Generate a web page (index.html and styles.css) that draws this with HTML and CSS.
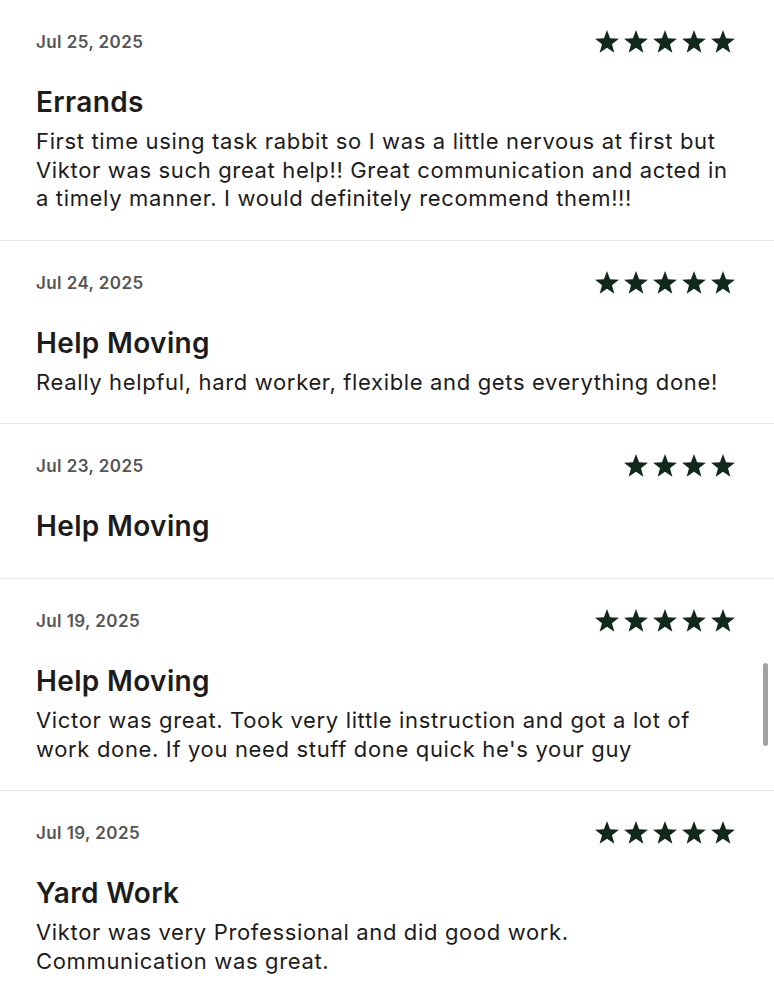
FILE: index.html
```html
<!DOCTYPE html>
<html>
<head>
<meta charset="utf-8">
<link rel="stylesheet" href="styles.css">
</head>
<body>
<svg width="0" height="0" class="defs">
  <defs>
    <symbol id="star" viewBox="0 0 24 24">
      <polygon points="12,1 14.85,8.6 23,8.9 16.6,14 18.8,22 12,17.4 5.2,22 7.4,14 1,8.9 9.15,8.6"/>
    </symbol>
  </defs>
</svg>
<main class="reviews">
  <section class="review">
    <div class="head">
      <span class="date">Jul 25, 2025</span>
      <span class="stars"><svg><use href="#star"/></svg><svg><use href="#star"/></svg><svg><use href="#star"/></svg><svg><use href="#star"/></svg><svg><use href="#star"/></svg></span>
    </div>
    <h2 class="title">Errands</h2>
    <p class="body">First time using task rabbit so I was a little nervous at first but Viktor was such great help!! Great communication and acted in a timely manner. I would definitely recommend them!!!</p>
  </section>
  <section class="review">
    <div class="head">
      <span class="date">Jul 24, 2025</span>
      <span class="stars"><svg><use href="#star"/></svg><svg><use href="#star"/></svg><svg><use href="#star"/></svg><svg><use href="#star"/></svg><svg><use href="#star"/></svg></span>
    </div>
    <h2 class="title">Help Moving</h2>
    <p class="body">Really helpful, hard worker, flexible and gets everything done!</p>
  </section>
  <section class="review">
    <div class="head">
      <span class="date">Jul 23, 2025</span>
      <span class="stars"><svg><use href="#star"/></svg><svg><use href="#star"/></svg><svg><use href="#star"/></svg><svg><use href="#star"/></svg></span>
    </div>
    <h2 class="title">Help Moving</h2>
    <p class="body"></p>
  </section>
  <section class="review">
    <div class="head">
      <span class="date">Jul 19, 2025</span>
      <span class="stars"><svg><use href="#star"/></svg><svg><use href="#star"/></svg><svg><use href="#star"/></svg><svg><use href="#star"/></svg><svg><use href="#star"/></svg></span>
    </div>
    <h2 class="title">Help Moving</h2>
    <p class="body">Victor was great. Took very little instruction and got a lot of work done. If you need stuff done quick he's your guy</p>
  </section>
  <section class="review">
    <div class="head">
      <span class="date">Jul 19, 2025</span>
      <span class="stars"><svg><use href="#star"/></svg><svg><use href="#star"/></svg><svg><use href="#star"/></svg><svg><use href="#star"/></svg><svg><use href="#star"/></svg></span>
    </div>
    <h2 class="title">Yard Work</h2>
    <p class="body">Viktor was very Professional and did good work. Communication was great.</p>
  </section>
</main>
<div class="scrollbar"></div>
</body>
</html>
```

FILE: styles.css
```css
html, body {
  margin: 0;
  padding: 0;
  background: #ffffff;
}
body {
  font-family: Inter, "Noto Sans", sans-serif;
  color: #1c1c1c;
  overflow: hidden;
  height: 1000px;
}
.defs {
  position: absolute;
}
.reviews {
  display: flex;
  flex-direction: column;
}
.review {
  padding: 28px 38px 27px 36px;
  border-bottom: 1px solid #e9e9e9;
}
.head {
  display: flex;
  justify-content: space-between;
  align-items: center;
  height: 28px;
}
.date {
  font-size: 17px;
  font-weight: 600;
  letter-spacing: 0.42px;
  color: #555555;
}
.stars {
  display: flex;
  gap: 3px;
}
.stars svg {
  width: 26px;
  height: 26px;
  fill: #11291b;
}
.title {
  margin: 29px 0 0;
  font-size: 28px;
  line-height: 34px;
  font-weight: 600;
  letter-spacing: 0.35px;
  color: #1c1c1c;
}
.body {
  margin: 8px 0 0;
  font-size: 22px;
  line-height: 28.5px;
  letter-spacing: 0.65px;
  color: #1c1c1c;
}
.scrollbar {
  position: absolute;
  left: 763px;
  top: 663px;
  width: 5px;
  height: 83px;
  border-radius: 3px;
  background: #a3a3a3;
}
```
